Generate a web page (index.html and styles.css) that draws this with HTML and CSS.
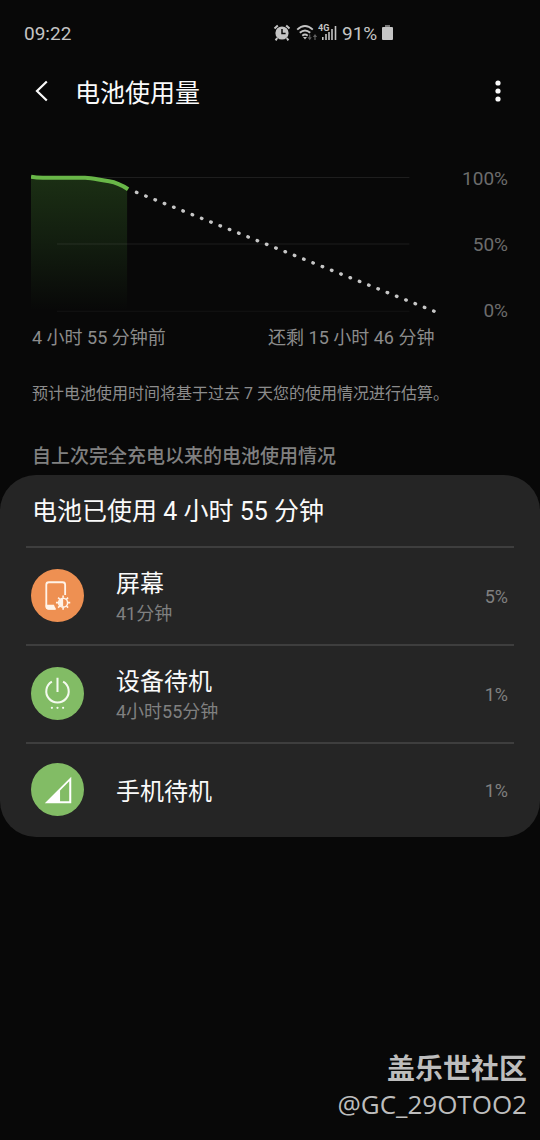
FILE: index.html
```html
<!DOCTYPE html>
<html lang="zh-CN">
<head>
<meta charset="utf-8">
<meta name="viewport" content="width=device-width, initial-scale=1">
<title>电池使用量</title>
<link rel="stylesheet" href="styles.css">
</head>
<body>
<div class="status">
  <span class="clock">09:22</span>
  <div class="indicators">
    <svg class="alarm" width="18" height="18" viewBox="0 0 18 18">
      <circle cx="9" cy="9" r="6.6" fill="#c4c4c4"/>
      <path d="M1.5 4.6 4.8 1.6M16.5 4.6 13.2 1.6M4.2 14 2.6 16.4M13.8 14l1.6 2.4" stroke="#c4c4c4" stroke-width="2" fill="none"/>
      <path d="M9 5v4.6h3.6" stroke="#080808" stroke-width="1.5" fill="none"/>
    </svg>
    <svg class="wifi" width="22" height="18" viewBox="0 0 22 18">
      <path d="M1.2 5.6q7.8-7.2 15.6 0M3.8 8.8q5.2-4.8 10.4 0M6.3 11.8q2.7-2.4 5.4 0" stroke="#c4c4c4" stroke-width="1.9" fill="none"/>
      <path d="M7 13h4l-2 2.4z" fill="#c4c4c4"/>
      <path d="M13.7 10.5v3.2M19 16v-3.4" stroke="#606060" stroke-width="1.2"/>
      <path d="M11.6 13.2h4.2l-2.1 3zM16.9 13h4.2L19 10z" fill="#606060"/>
    </svg>
    <svg class="signal" width="19" height="18" viewBox="0 0 19 18">
      <text class="network" x="0" y="7">4G</text>
      <path d="M4.8 16v-3M8 16v-6M11 16V8M14 16V5M17.500 16V2" stroke="#c4c4c4" stroke-width="1.6"/>
    </svg>
    <span class="level">91%</span>
    <svg class="battery" width="11" height="16" viewBox="0 0 11 16">
      <path d="M3 0h5v2H3z" fill="#777"/>
      <rect y="2" width="11" height="13" rx="1" fill="#c4c4c4"/>
    </svg>
  </div>
</div>

<header class="bar">
  <button class="icon-button" aria-label="返回">
    <svg width="16" height="24" viewBox="0 0 16 24"><path d="M12.8 1.5 3 11l9.800 9.500" fill="none" stroke="#fafafa" stroke-width="2.200"/></svg>
  </button>
  <h1>电池使用量</h1>
  <button class="icon-button" aria-label="更多选项">
    <svg width="16" height="24" viewBox="0 0 16 24"><g fill="#fafafa"><circle cx="8" cy="3" r="2.600"/><circle cx="8" cy="11" r="2.600"/><circle cx="8" cy="19" r="2.600"/></g></svg>
  </button>
</header>

<main>
  <section class="chart">
    <div class="plot">
      <svg class="graph" viewBox="0 0 405 146" role="img" aria-label="电池电量">
        <defs>
          <linearGradient id="area" x1="0" y1="0" x2="0" y2="1">
            <stop offset="0" stop-color="#1b2f14"/>
            <stop offset=".5" stop-color="#121d0f"/>
            <stop offset="1" stop-color="#080808"/>
          </linearGradient>
        </defs>
        <path d="M0 7 10 8H56C72 8 84 10 96 19V140H0z" fill="url(#area)"/>
        <path d="M56 7.500H378" stroke="#1e1e1e"/>
        <path d="M26 74H378" stroke="#fff" stroke-opacity=".09"/>
        <path d="M26 141H378" stroke="#fff" stroke-opacity=".05"/>
        <path d="M0 6.800Q5 7.800 12 7.800H54C62 7.800 68 10 78 11.200 86 12.500 90 14.500 97 19.200" fill="none" stroke="#69b748" stroke-width="4"/>
        <path d="M105.300 22.300 403 141.200" fill="none" stroke="#c6c6c6" stroke-width="3.400" stroke-linecap="round" stroke-dasharray=".5 9.490"/>
      </svg>
      <div class="times"><span>4 小时 55 分钟前</span><span>还剩 15 小时 46 分钟</span></div>
    </div>
    <div class="scale"><span>100%</span><span>50%</span><span>0%</span></div>
  </section>
  <p class="note">预计电池使用时间将基于过去 7 天您的使用情况进行估算。</p>

  <h2 class="section-title">自上次完全充电以来的电池使用情况</h2>
  <section class="card">
    <h3>电池已使用 4 小时 55 分钟</h3>
    <ul>
      <li>
        <svg class="badge" viewBox="0 0 52 52">
          <circle cx="26" cy="26" r="26" fill="#ee9052"/>
          <path d="M33.500 25.500V15.500Q33.500 13 31 13H17.500Q15 13 15 15.500V36.500Q15 39 17.500 39H24" fill="none" stroke="#fff3e8" stroke-width="1.800"/>
          <path d="M14.500 35H22.500L24.500 39.800H17Q14.500 39.500 14.500 37z" fill="#fff3e8"/>
          <circle cx="31.500" cy="33" r="4.400" fill="none" stroke="#fff3e8" stroke-width="1.500"/>
          <path d="M31.500 29a4 4 0 0 0 0 8z" fill="#fff3e8"/>
          <path d="M31.500 26v2.200M31.500 37.800v2.200M24.500 33h2.200M36.300 33h2.200M26.600 28.100l1.600 1.600M34.800 36.300l1.600 1.600M36.400 28.100l-1.600 1.600M28.200 36.300l-1.600 1.600" stroke="#fff3e8" stroke-width="1.600"/>
        </svg>
        <div class="info"><span class="name">屏幕</span><span class="time">41分钟</span></div>
        <span class="percent">5%</span>
      </li>
      <li>
        <svg class="badge" viewBox="0 0 52 52">
          <circle cx="26" cy="26" r="26" fill="#82bc65"/>
          <path d="M20.500 14.300A11 11 0 1 0 31.500 14.300M26 10.500V24.500" fill="none" stroke="#f4faef" stroke-width="2"/>
          <g fill="#f4faef"><circle cx="20.500" cy="40" r="1.100"/><circle cx="26" cy="40" r="1.100"/><circle cx="31.500" cy="40" r="1.100"/></g>
        </svg>
        <div class="info"><span class="name">设备待机</span><span class="time">4小时55分钟</span></div>
        <span class="percent">1%</span>
      </li>
      <li>
        <svg class="badge" viewBox="0 0 52 52">
          <circle cx="26" cy="26" r="26" fill="#82bc65"/>
          <path fill-rule="evenodd" d="M13.500 39.500 39.500 13.500V39.500zM28.500 27V37.500H37.500V18z" fill="#fff"/>
        </svg>
        <div class="info"><span class="name">手机待机</span></div>
        <span class="percent">1%</span>
      </li>
    </ul>
  </section>
</main>

<footer class="credit"><strong>盖乐世社区</strong><span>@GC_29OTOO2</span></footer>
</body>
</html>
```

FILE: styles.css
```css
* { box-sizing: border-box; }

body {
  margin: 0;
  min-height: 100vh;
  display: flex;
  flex-direction: column;
  background: #080808;
  color: #fafafa;
  font-family: Roboto, "Noto Sans CJK SC", sans-serif;
}

h1, h2, h3, p, ul { margin: 0; padding: 0; font-weight: 400; }
svg { display: block; flex: none; }

.status {
  display: flex;
  height: 64px;
  padding: 2px 24px 0;
  align-items: center;
  color: #c4c4c4;
  font-size: 19px;
}
.clock { flex: 1; }
.indicators {
  flex: 1;
  display: flex;
  align-items: center;
  gap: 5px;
  padding-left: 6px;
}
.network { font: 700 9px Roboto, sans-serif; fill: #c4c4c4; }
.wifi { margin-right: -5px; }

.bar {
  display: flex;
  align-items: center;
  height: 56px;
  padding: 0 34px;
  gap: 25px;
}
.bar h1 { flex: 1; padding-top: 4px; font-size: 25px; line-height: 36px; }
.icon-button {
  display: flex;
  padding: 0;
  border: 0;
  background: none;
}

.chart {
  display: flex;
  justify-content: space-between;
  padding: 50px 32px 0 31px;
}
.plot { width: 85%; }
.graph { width: 100%; height: auto; }
.times {
  display: flex;
  justify-content: space-between;
  margin-top: 8px;
  padding: 0 2px 0 1px;
  color: #8c8c8c;
  font-size: 18px;
  line-height: 28px;
}
.scale {
  display: flex;
  flex-direction: column;
  align-items: flex-end;
  gap: 42px;
  margin: -3px 0 0 -64px;
  color: #6c6c6c;
  font-size: 19px;
  line-height: 24px;
}

.note {
  padding: 30px 32px 0;
  color: #8c8c8c;
  font-size: 16px;
  line-height: 24px;
}
.section-title {
  padding: 37px 32px 4px;
  color: #808080;
  font-size: 19px;
  font-weight: 500;
  line-height: 28px;
}

.card {
  padding: 0 26px;
  border-radius: 36px;
  background: #252525;
}
.card h3 {
  padding: 19px 6px 16px;
  font-size: 25px;
  line-height: 36px;
}
.card ul { list-style: none; }
.card li {
  display: flex;
  align-items: center;
  min-height: 98px;
  padding: 0 6px 2px 5px;
  border-top: 2px solid #3e3e3e;
}
.card li:last-child { min-height: 95px; }
.badge { width: 53px; height: 53px; }
.info {
  flex: 1;
  display: flex;
  flex-direction: column;
  padding-top: 4px;
  margin-left: 32px;
}
.name { font-size: 24px; line-height: 34px; }
.time { color: #808080; font-size: 18px; line-height: 26px; }
.percent { padding-top: 2px; color: #808080; font-size: 18px; }

.credit {
  display: flex;
  flex-direction: column;
  align-items: flex-end;
  margin-top: auto;
  padding: 0 13px 18px;
  color: #bdbdbd;
  font-family: "Open Sans", "Noto Sans CJK SC", sans-serif;
  font-size: 26px;
  line-height: 36px;
}
.credit strong { font-size: 28px; font-weight: 700; }
```
